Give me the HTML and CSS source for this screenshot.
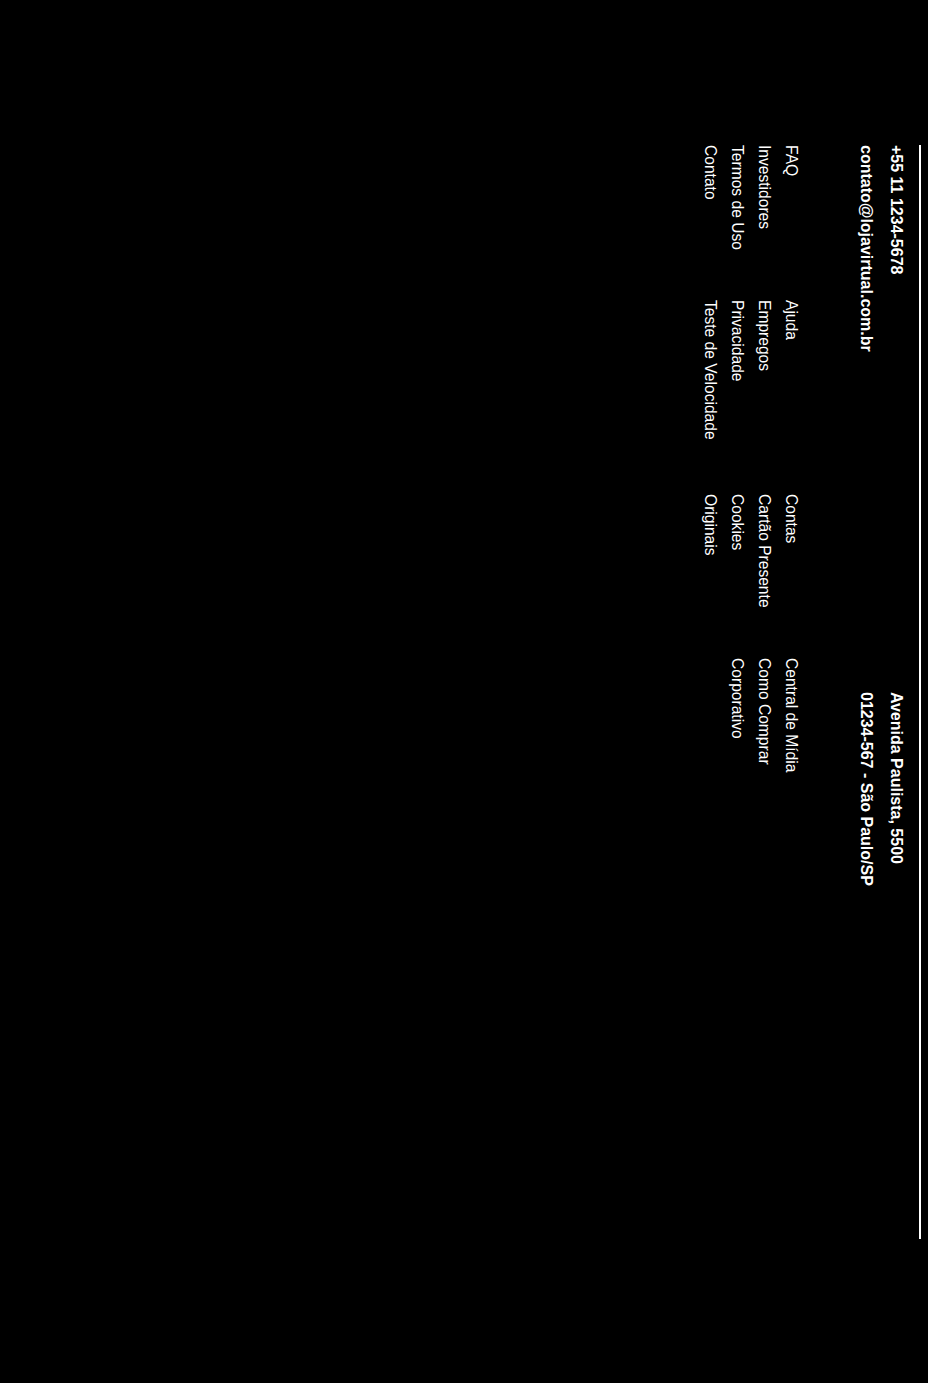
FILE: index.html
```html
<!DOCTYPE html>
<html lang="pt-BR">
<head>
<meta charset="utf-8">
<title>Rodapé</title>
<link rel="stylesheet" href="styles.css">
</head>
<body>
<div class="page">
<footer class="footer">
  <div class="contact">
    <div class="contact-col">
      <p class="contact-line">+55 11 1234-5678</p>
      <p class="contact-line">contato@lojavirtual.com.br</p>
    </div>
    <div class="contact-col">
      <p class="contact-line">Avenida Paulista, 5500</p>
      <p class="contact-line">01234-567 - São Paulo/SP</p>
    </div>
  </div>
  <nav class="links">
    <ul class="link-col">
      <li><a href="#">FAQ</a></li>
      <li><a href="#">Investidores</a></li>
      <li><a href="#">Termos de Uso</a></li>
      <li><a href="#">Contato</a></li>
    </ul>
    <ul class="link-col">
      <li><a href="#">Ajuda</a></li>
      <li><a href="#">Empregos</a></li>
      <li><a href="#">Privacidade</a></li>
      <li><a href="#">Teste de Velocidade</a></li>
    </ul>
    <ul class="link-col">
      <li><a href="#">Contas</a></li>
      <li><a href="#">Cartão Presente</a></li>
      <li><a href="#">Cookies</a></li>
      <li><a href="#">Originais</a></li>
    </ul>
    <ul class="link-col">
      <li><a href="#">Central de Mídia</a></li>
      <li><a href="#">Como Comprar</a></li>
      <li><a href="#">Corporativo</a></li>
    </ul>
  </nav>
</footer>
</div>
</body>
</html>
```
FILE: styles.css
```css
html, body {
  margin: 0;
  padding: 0;
  background: #000;
}

body {
  font-family: "Liberation Sans", Arial, sans-serif;
  color: #fff;
  font-size: 16px;
}

.page {
  display: flex;
  justify-content: flex-end;
  padding: 145px 7px 0 0;
}

.footer {
  writing-mode: vertical-rl;
  inline-size: 1094px;
  box-sizing: border-box;
  border-block-start: 2px solid #fff;
  padding-block-start: 14px;
}

.contact {
  display: grid;
  grid-template-columns: 1fr 1fr;
}

.contact-line {
  margin-block: 0 12px;
  font-weight: bold;
  line-height: normal;
}

.links {
  display: grid;
  grid-template-columns: 155px 194px 164px auto;
  margin-block-start: 41.5px;
}

.link-col {
  list-style: none;
  margin: 0;
  padding: 0;
}

.link-col li {
  font-size: 15.6px;
  line-height: 26.67px;
}

.link-col a {
  color: #fff;
  text-decoration: none;
}
```
